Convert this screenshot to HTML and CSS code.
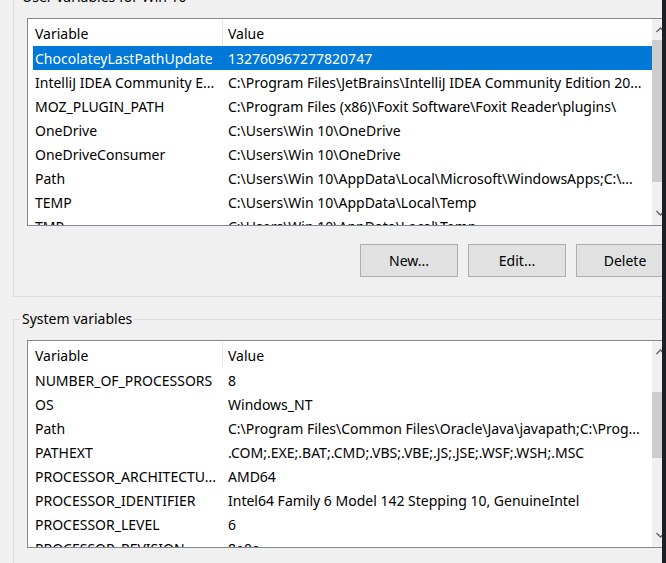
FILE: index.html
```html
<!DOCTYPE html>
<html>
<head>
<meta charset="utf-8">
<link rel="stylesheet" href="styles.css">
</head>
<body>
<div class="window">
  <div class="content">
    <fieldset class="group group-user">
      <legend class="group-label">User variables for Win 10</legend>
      <div class="list">
        <div class="list-body">
          <div class="list-header">
            <div class="hcol hcol-name">Variable</div>
            <div class="hsep"></div>
            <div class="hcol hcol-value">Value</div>
          </div>
          <div class="row selected"><div class="c-name">ChocolateyLastPathUpdate</div><div class="c-value">132760967277820747</div></div>
          <div class="row"><div class="c-name">IntelliJ IDEA Community E...</div><div class="c-value">C:\Program Files\JetBrains\IntelliJ IDEA Community Edition 20...</div></div>
          <div class="row"><div class="c-name">MOZ_PLUGIN_PATH</div><div class="c-value">C:\Program Files (x86)\Foxit Software\Foxit Reader\plugins\</div></div>
          <div class="row"><div class="c-name">OneDrive</div><div class="c-value">C:\Users\Win 10\OneDrive</div></div>
          <div class="row"><div class="c-name">OneDriveConsumer</div><div class="c-value">C:\Users\Win 10\OneDrive</div></div>
          <div class="row"><div class="c-name">Path</div><div class="c-value">C:\Users\Win 10\AppData\Local\Microsoft\WindowsApps;C:\...</div></div>
          <div class="row"><div class="c-name">TEMP</div><div class="c-value">C:\Users\Win 10\AppData\Local\Temp</div></div>
          <div class="row"><div class="c-name">TMP</div><div class="c-value">C:\Users\Win 10\AppData\Local\Temp</div></div>
        </div>
        <div class="scrollbar">
          <div class="sb-btn"><svg width="17" height="17" viewBox="0 0 17 17"><path d="M4.5 13 L8.5 9 L12.5 13" fill="none" stroke="#606060" stroke-width="1.3"/></svg></div>
          <div class="sb-track"><div class="sb-thumb thumb-user"></div></div>
          <div class="sb-btn"><svg width="17" height="17" viewBox="0 0 17 17"><path d="M4.5 3 L8.5 7 L12.5 3" fill="none" stroke="#606060" stroke-width="1.3"/></svg></div>
        </div>
      </div>
      <div class="buttons">
        <button class="btn">New...</button>
        <button class="btn">Edit...</button>
        <button class="btn">Delete</button>
      </div>
    </fieldset>

    <fieldset class="group group-system">
      <legend class="group-label">System variables</legend>
      <div class="list">
        <div class="list-body">
          <div class="list-header">
            <div class="hcol hcol-name">Variable</div>
            <div class="hsep"></div>
            <div class="hcol hcol-value">Value</div>
          </div>
          <div class="row"><div class="c-name">NUMBER_OF_PROCESSORS</div><div class="c-value">8</div></div>
          <div class="row"><div class="c-name">OS</div><div class="c-value">Windows_NT</div></div>
          <div class="row"><div class="c-name">Path</div><div class="c-value">C:\Program Files\Common Files\Oracle\Java\javapath;C:\Prog...</div></div>
          <div class="row"><div class="c-name">PATHEXT</div><div class="c-value">.COM;.EXE;.BAT;.CMD;.VBS;.VBE;.JS;.JSE;.WSF;.WSH;.MSC</div></div>
          <div class="row"><div class="c-name">PROCESSOR_ARCHITECTU...</div><div class="c-value">AMD64</div></div>
          <div class="row"><div class="c-name">PROCESSOR_IDENTIFIER</div><div class="c-value">Intel64 Family 6 Model 142 Stepping 10, GenuineIntel</div></div>
          <div class="row"><div class="c-name">PROCESSOR_LEVEL</div><div class="c-value">6</div></div>
          <div class="row"><div class="c-name">PROCESSOR_REVISION</div><div class="c-value">8e0a</div></div>
        </div>
        <div class="scrollbar">
          <div class="sb-btn"><svg width="17" height="17" viewBox="0 0 17 17"><path d="M4.5 13 L8.5 9 L12.5 13" fill="none" stroke="#606060" stroke-width="1.3"/></svg></div>
          <div class="sb-track"><div class="sb-thumb thumb-system"></div></div>
          <div class="sb-btn"><svg width="17" height="17" viewBox="0 0 17 17"><path d="M4.5 3 L8.5 7 L12.5 3" fill="none" stroke="#606060" stroke-width="1.3"/></svg></div>
        </div>
      </div>
    </fieldset>
  </div>
  <div class="edge"></div>
</div>
</body>
</html>
```

FILE: styles.css
```css
html, body {
  margin: 0;
  padding: 0;
}
body {
  width: 666px;
  height: 563px;
  overflow: hidden;
  background: #f0f0f0;
  font-family: "Noto Sans", "Open Sans", sans-serif;
  font-size: 14px;
  color: #000;
}
.window {
  display: flex;
  width: 666px;
  height: 563px;
}
.content {
  width: 662px;
  height: 563px;
  overflow: hidden;
  flex: 0 0 662px;
}
.edge {
  flex: 0 0 4px;
  background: #1b1f27;
}
.group {
  margin: 0 0 0 13px;
  padding: 0;
  width: 700px;
  min-width: 0;
  border: 1px solid #dcdcdc;
  box-sizing: border-box;
}
.group-user {
  margin-top: -13px;
  padding-bottom: 19px;
}
.group-system {
  margin-top: 12px;
  height: 300px;
}
.group-label {
  margin-left: 6px;
  padding: 0 2px;
  height: 20px;
  line-height: 20px;
  font-size: 14px;
}
.list {
  display: flex;
  margin: 11px 0 0 13px;
  width: 643px;
  height: 208px;
  box-sizing: border-box;
  border: 1px solid #828790;
  background: #fff;
}
.list-body {
  flex: 0 0 624px;
  overflow: hidden;
}
.list-header {
  display: flex;
  height: 27px;
}
.hcol {
  padding-top: 3px;
  line-height: 24px;
  box-sizing: border-box;
}
.hcol-name {
  width: 194px;
  padding-left: 7px;
}
.hsep {
  width: 1px;
  margin: 1px 0 1px 0;
  background: #e5e5e5;
}
.hcol-value {
  padding-left: 5px;
}
.row {
  display: flex;
  height: 24px;
  box-sizing: border-box;
  padding-top: 1px;
  line-height: 23px;
  margin-left: 5px;
  white-space: nowrap;
}
.row.selected {
  background: #0078d7;
  color: #fff;
}
.c-name {
  flex: 0 0 195px;
  padding-left: 2px;
  box-sizing: border-box;
  overflow: hidden;
}
.c-value {
  flex: 1;
  overflow: hidden;
}
.scrollbar {
  flex: 0 0 17px;
  display: flex;
  flex-direction: column;
  background: #f0f0f0;
}
.sb-btn {
  height: 17px;
  flex: 0 0 17px;
}
.sb-btn svg {
  display: block;
}
.sb-track {
  flex: 1;
  display: flex;
  flex-direction: column;
}
.sb-thumb {
  background: #cdcdcd;
}
.thumb-user {
  margin-top: 4px;
  height: 142px;
}
.thumb-system {
  margin-top: 34px;
  height: 66px;
}
.buttons {
  display: flex;
  gap: 10px;
  margin: 18px 0 0 346px;
}
.btn {
  flex: 0 0 98px;
  width: 98px;
  height: 33px;
  background: #e1e1e1;
  border: 1px solid #adadad;
  font-family: "Noto Sans", "Open Sans", sans-serif;
  font-size: 14px;
  color: #000;
  padding: 0;
}
```
